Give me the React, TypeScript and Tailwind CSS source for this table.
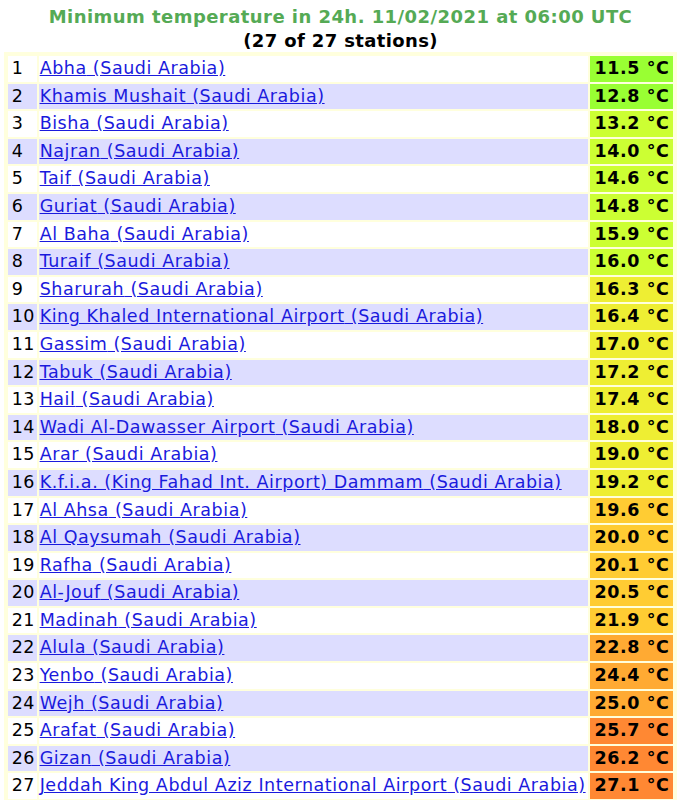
import React from "react";

type Row = { name: string; temp: string; color: string };

const green = "bg-[#99ff33]";
const lime = "bg-[#ccff33]";
const yellow = "bg-[#eeee33]";
const amber = "bg-[#ffcc33]";
const orange = "bg-[#ffaa33]";
const deep = "bg-[#ff8833]";

const rows: Row[] = [
  { name: "Abha", temp: "11.5", color: green },
  { name: "Khamis Mushait", temp: "12.8", color: green },
  { name: "Bisha", temp: "13.2", color: lime },
  { name: "Najran", temp: "14.0", color: lime },
  { name: "Taif", temp: "14.6", color: lime },
  { name: "Guriat", temp: "14.8", color: lime },
  { name: "Al Baha", temp: "15.9", color: lime },
  { name: "Turaif", temp: "16.0", color: lime },
  { name: "Sharurah", temp: "16.3", color: yellow },
  { name: "King Khaled International Airport", temp: "16.4", color: yellow },
  { name: "Gassim", temp: "17.0", color: yellow },
  { name: "Tabuk", temp: "17.2", color: yellow },
  { name: "Hail", temp: "17.4", color: yellow },
  { name: "Wadi Al-Dawasser Airport", temp: "18.0", color: yellow },
  { name: "Arar", temp: "19.0", color: yellow },
  { name: "K.f.i.a. (King Fahad Int. Airport) Dammam", temp: "19.2", color: yellow },
  { name: "Al Ahsa", temp: "19.6", color: amber },
  { name: "Al Qaysumah", temp: "20.0", color: amber },
  { name: "Rafha", temp: "20.1", color: amber },
  { name: "Al-Jouf", temp: "20.5", color: amber },
  { name: "Madinah", temp: "21.9", color: amber },
  { name: "Alula", temp: "22.8", color: orange },
  { name: "Yenbo", temp: "24.4", color: orange },
  { name: "Wejh", temp: "25.0", color: orange },
  { name: "Arafat", temp: "25.7", color: deep },
  { name: "Gizan", temp: "26.2", color: deep },
  { name: "Jeddah King Abdul Aziz International Airport", temp: "27.1", color: deep },
];

export default function App() {
  return (
    <div className="bg-white w-[681px] h-[800px] overflow-hidden font-['DejaVu_Sans',Verdana,sans-serif] text-black">
      <div className="pt-[5px] text-center leading-[24px] text-[18px] font-bold">
        <div className="text-[#55aa55] tracking-[0.45px]">
          Minimum temperature in 24h. 11/02/2021 at 06:00 UTC
        </div>
        <div className="tracking-[0.37px]">(27 of 27 stations)</div>
      </div>
      <table className="mx-auto -mt-[1px] border-separate border-spacing-[2px] border-2 border-[#ffffdd] bg-[#ffffdd] text-[17.5px] leading-[19.6px] tracking-[0.55px]">
        <tbody>
          {rows.map((r, i) => {
            const bg = i % 2 === 0 ? "bg-white" : "bg-[#ddddff]";
            return (
              <tr key={r.name}>
                <td className={`${bg} pl-[4px] pr-0 py-[3px] w-[29px]`}>{i + 1}</td>
                <td className={`${bg} pl-[1px] pr-[2px] py-[3px] whitespace-nowrap`}>
                  <a href="#" className="text-[#1a1add] underline">
                    {r.name} (Saudi Arabia)
                  </a>
                </td>
                <td className={`${r.color} pl-[5px] pr-[4px] py-[3px] font-bold text-right whitespace-nowrap`}>
                  {r.temp} °C
                </td>
              </tr>
            );
          })}
        </tbody>
      </table>
    </div>
  );
}
